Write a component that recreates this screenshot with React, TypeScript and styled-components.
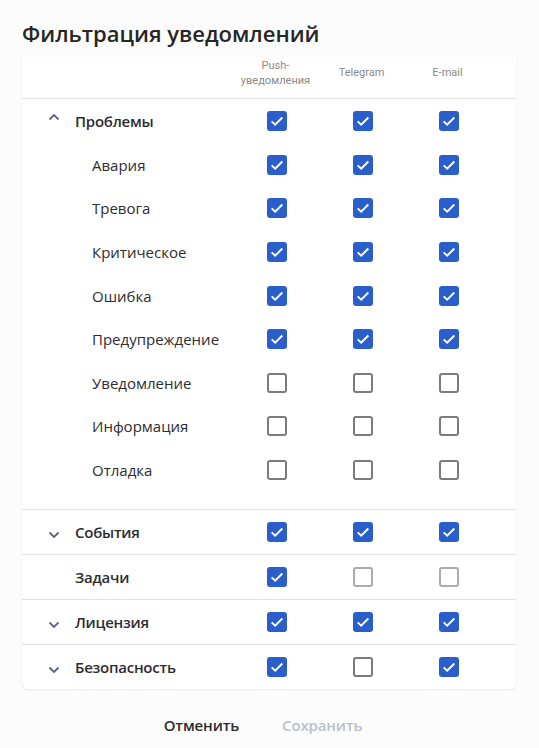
import React from 'react';
import styled, { createGlobalStyle } from 'styled-components';

const GlobalStyle = createGlobalStyle`
  html, body {
    margin: 0;
    padding: 0;
    background: #fcfcfc;
    font-family: 'Open Sans', 'Noto Sans', sans-serif;
  }
`;

type Check = 'on' | 'off' | 'disabled';

interface Row {
  label: string;
  checks: Check[];
  chevron?: 'up' | 'down';
}

const problems: Row[] = [
  { label: 'Авария', checks: ['on', 'on', 'on'] },
  { label: 'Тревога', checks: ['on', 'on', 'on'] },
  { label: 'Критическое', checks: ['on', 'on', 'on'] },
  { label: 'Ошибка', checks: ['on', 'on', 'on'] },
  { label: 'Предупреждение', checks: ['on', 'on', 'on'] },
  { label: 'Уведомление', checks: ['off', 'off', 'off'] },
  { label: 'Информация', checks: ['off', 'off', 'off'] },
  { label: 'Отладка', checks: ['off', 'off', 'off'] },
];

const groups: Row[] = [
  { label: 'События', checks: ['on', 'on', 'on'], chevron: 'down' },
  { label: 'Задачи', checks: ['on', 'disabled', 'disabled'] },
  { label: 'Лицензия', checks: ['on', 'on', 'on'], chevron: 'down' },
  { label: 'Безопасность', checks: ['on', 'off', 'on'], chevron: 'down' },
];

const Page = styled.div`
  padding: 18px 23px 0 22px;
`;

const Title = styled.h1`
  margin: 0 0 9px;
  font-size: 22px;
  font-weight: 600;
  color: #262626;
  line-height: 30px;
`;

const Card = styled.div`
  background: #fff;
  border-radius: 0 0 6px 6px;
  box-shadow: 0 1px 2px rgba(0, 0, 0, 0.08);
`;

const Grid = styled.div`
  display: grid;
  grid-template-columns: 212px 86px 86px 86px 1fr;
  align-items: center;
`;

const HeadRow = styled(Grid)`
  height: 41px;
  border-bottom: 1px solid #e2e2e2;
`;

const HeadCell = styled.div<{ $pad: number }>`
  font-family: Roboto, 'Noto Sans', sans-serif;
  font-size: 11px;
  line-height: 15px;
  color: #8a8a8a;
  text-align: center;
  align-self: start;
  padding-top: ${(p) => p.$pad}px;
  margin-left: -3px;
`;

const BodyRow = styled(Grid)<{ $height: number; $border?: boolean }>`
  height: ${(p) => p.$height}px;
  border-bottom: ${(p) => (p.$border ? '1px solid #e2e2e2' : 'none')};
`;

const Section = styled.div`
  padding-bottom: 17px;
  border-bottom: 1px solid #e2e2e2;
`;

const LabelCell = styled.div<{ $child?: boolean }>`
  display: flex;
  align-items: center;
  padding-left: ${(p) => (p.$child ? 70 : 26)}px;
  font-size: 15px;
  font-weight: ${(p) => (p.$child ? 400 : 600)};
  letter-spacing: ${(p) => (p.$child ? 0 : -0.25)}px;
  color: #2c2c33;
`;

const Chevron = styled.span<{ $up?: boolean }>`
  width: 12px;
  margin-right: 15px;
  display: flex;
  justify-content: center;
  color: #5d6577;
  transform: translateY(${(p) => (p.$up ? -4 : 3)}px);
`;

const Spacer = styled.span`
  width: 27px;
`;

const BoxCell = styled.div`
  display: flex;
  justify-content: center;
`;

const Box = styled.span<{ $state: Check }>`
  width: 20px;
  height: 20px;
  box-sizing: border-box;
  border-radius: 3px;
  display: flex;
  align-items: center;
  justify-content: center;
  background: ${(p) => (p.$state === 'on' ? '#2a5fcb' : '#fff')};
  border: ${(p) =>
    p.$state === 'on'
      ? 'none'
      : `2px solid ${p.$state === 'disabled' ? '#ababab' : '#7b7b7b'}`};
`;

const Footer = styled.div`
  display: flex;
  justify-content: center;
  gap: 43px;
  padding: 26px 0 0 0;
  margin-left: -12px;
`;

const FooterButton = styled.button<{ $muted?: boolean }>`
  border: none;
  background: none;
  padding: 0;
  font-family: 'Open Sans', 'Noto Sans', sans-serif;
  font-size: 15px;
  font-weight: 600;
  letter-spacing: -0.15px;
  color: ${(p) => (p.$muted ? '#b9c0cc' : '#2a2a30')};
`;

function ChevronIcon({ up }: { up?: boolean }) {
  return (
    <svg width="12" height="8" viewBox="0 0 12 8">
      <path
        d={up ? 'M1.5 6.5 L6 2 L10.5 6.5' : 'M1.5 1.5 L6 6 L10.5 1.5'}
        fill="none"
        stroke="currentColor"
        strokeWidth="1.8"
      />
    </svg>
  );
}

function CheckBox({ state }: { state: Check }) {
  return (
    <Box $state={state}>
      {state === 'on' && (
        <svg width="16" height="16" viewBox="0 0 15 15">
          <path
            d="M2.5 7.8 L5.8 11 L12.5 4.2"
            fill="none"
            stroke="#fff"
            strokeWidth="1.8"
          />
        </svg>
      )}
    </Box>
  );
}

function Checks({ checks }: { checks: Check[] }) {
  return (
    <>
      {checks.map((c, i) => (
        <BoxCell key={i}>
          <CheckBox state={c} />
        </BoxCell>
      ))}
      <div />
    </>
  );
}

export default function App() {
  return (
    <>
      <GlobalStyle />
      <Page>
        <Title>Фильтрация уведомлений</Title>
        <Card>
          <HeadRow>
            <div />
            <HeadCell $pad={1}>
              Push-
              <br />
              уведомления
            </HeadCell>
            <HeadCell $pad={8}>Telegram</HeadCell>
            <HeadCell $pad={8}>E-mail</HeadCell>
            <div />
          </HeadRow>
          <Section>
            <BodyRow $height={44}>
              <LabelCell>
                <Chevron $up>
                  <ChevronIcon up />
                </Chevron>
                Проблемы
              </LabelCell>
              <Checks checks={['on', 'on', 'on']} />
            </BodyRow>
            {problems.map((r) => (
              <BodyRow key={r.label} $height={43.6}>
                <LabelCell $child>{r.label}</LabelCell>
                <Checks checks={r.checks} />
              </BodyRow>
            ))}
          </Section>
          {groups.map((r, i) => (
            <BodyRow key={r.label} $height={44} $border={i < groups.length - 1}>
              <LabelCell>
                {r.chevron ? (
                  <Chevron>
                    <ChevronIcon />
                  </Chevron>
                ) : (
                  <Spacer />
                )}
                {r.label}
              </LabelCell>
              <Checks checks={r.checks} />
            </BodyRow>
          ))}
        </Card>
        <Footer>
          <FooterButton>Отменить</FooterButton>
          <FooterButton $muted>Сохранить</FooterButton>
        </Footer>
      </Page>
    </>
  );
}
